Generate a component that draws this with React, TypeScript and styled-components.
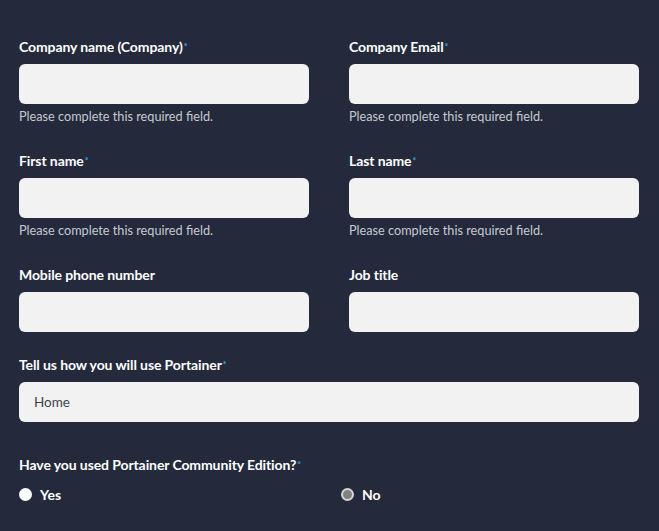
import styled, { createGlobalStyle } from 'styled-components';

const GlobalStyle = createGlobalStyle`
  html, body {
    margin: 0;
    background: #242a3b;
  }
  body {
    font-family: 'Lato', 'Open Sans', sans-serif;
  }
`;

interface FieldProps {
  label: string;
  required?: boolean;
  error?: boolean;
  value?: string;
}

const Field = (props: FieldProps) => {
  return (
    <StyledField>
      <StyledLabel>
        {props.label}
        {props.required && <StyledStar>*</StyledStar>}
      </StyledLabel>
      <StyledInput defaultValue={props.value} />
      {props.error && <StyledError>Please complete this required field.</StyledError>}
    </StyledField>
  );
};

export default function App() {
  return (
    <>
      <GlobalStyle />
      <StyledForm>
        <StyledRow>
          <Field label="Company name (Company)" required error />
          <Field label="Company Email" required error />
        </StyledRow>
        <StyledRow>
          <Field label="First name" required error />
          <Field label="Last name" required error />
        </StyledRow>
        <StyledRow>
          <Field label="Mobile phone number" />
          <Field label="Job title" />
        </StyledRow>
        <Field label="Tell us how you will use Portainer" required value="Home" />
        <StyledQuestion>
          <StyledLabel>
            Have you used Portainer Community Edition?
            <StyledStar>*</StyledStar>
          </StyledLabel>
          <StyledRadios>
            <StyledOption>
              <StyledRadio />
              Yes
            </StyledOption>
            <StyledOption>
              <StyledRadio $muted />
              No
            </StyledOption>
          </StyledRadios>
        </StyledQuestion>
      </StyledForm>
    </>
  );
}

const StyledForm = styled.form`
  display: flex;
  flex-direction: column;
  gap: 24px;
  padding: 38px 20px 20px 19px;
`;

const StyledRow = styled.div`
  display: grid;
  grid-template-columns: 290px 290px;
  column-gap: 40px;
`;

const StyledField = styled.div`
  display: flex;
  flex-direction: column;
`;

const StyledLabel = styled.label`
  font-size: 14px;
  font-weight: 700;
  line-height: 18px;
  color: #ffffff;
  margin-bottom: 8px;
  letter-spacing: -0.1px;
`;

const StyledStar = styled.span`
  color: #2aa7e8;
  font-size: 9px;
  vertical-align: top;
  margin-left: 1px;
`;

const StyledInput = styled.input`
  box-sizing: border-box;
  height: 40px;
  width: 100%;
  border: none;
  border-radius: 6px;
  background: #f2f2f2;
  padding: 0 15px;
  font-family: 'Lato', sans-serif;
  font-size: 13.5px;
  color: #3d4450;
  outline: none;
`;

const StyledError = styled.div`
  margin: 4px 0 4px;
  font-size: 12.7px;
  line-height: 16px;
  color: #c5c9d1;
`;

const StyledQuestion = styled.div`
  display: flex;
  flex-direction: column;
  margin-top: 10px;
`;

const StyledRadios = styled.div`
  display: grid;
  grid-template-columns: 322px auto;
  margin-top: 2px;
`;

const StyledOption = styled.label`
  display: flex;
  align-items: center;
  gap: 8px;
  height: 20px;
  font-size: 14px;
  font-weight: 700;
  color: #ffffff;
`;

const StyledRadio = styled.span<{ $muted?: boolean }>`
  box-sizing: border-box;
  width: 13px;
  height: 13px;
  border-radius: 50%;
  background: ${(p) => (p.$muted ? '#808080' : '#ffffff')};
  border: ${(p) => (p.$muted ? '2px solid #d4d4d4' : 'none')};
`;
